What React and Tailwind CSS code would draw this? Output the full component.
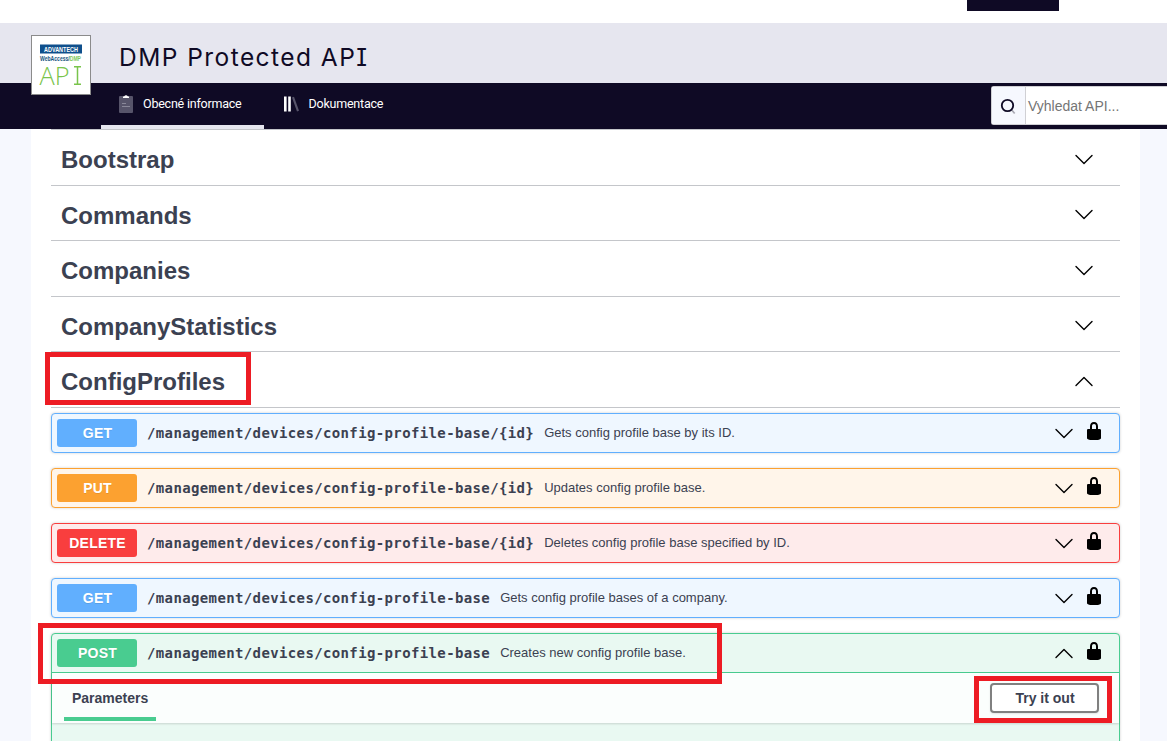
import React from "react";

const sections = ["Bootstrap", "Commands", "Companies", "CompanyStatistics"];

const tones = {
  GET: { box: "border-[#61affe] bg-[#eff7ff]", badge: "bg-[#61affe]" },
  PUT: { box: "border-[#fca130] bg-[#fff5ea]", badge: "bg-[#fca130]" },
  DELETE: { box: "border-[#f93e3e] bg-[#feebeb]", badge: "bg-[#f93e3e]" },
  POST: { box: "border-[#49cc90] bg-[#e9f9f2]", badge: "bg-[#49cc90]" },
};

const operations = [
  { method: "GET", path: "/management/devices/config-profile-base/{id}", text: "Gets config profile base by its ID." },
  { method: "PUT", path: "/management/devices/config-profile-base/{id}", text: "Updates config profile base." },
  { method: "DELETE", path: "/management/devices/config-profile-base/{id}", text: "Deletes config profile base specified by ID." },
  { method: "GET", path: "/management/devices/config-profile-base", text: "Gets config profile bases of a company." },
];

function Chevron({ up }) {
  return (
    <svg width="20" height="20" viewBox="0 0 20 20" fill="none" stroke="#000" strokeWidth="1.4" strokeLinecap="round" strokeLinejoin="round">
      <path d={up ? "M2 14.500 L10 6.500 L18 14.500" : "M2 6.500 L10 14.500 L18 6.500"} />
    </svg>
  );
}

function Lock() {
  return (
    <svg width="20" height="20" viewBox="0 0 20 20" fill="#000">
      <path d="M15.8 8H14V5.6C14 2.703 12.665 1 10 1 7.334 1 6 2.703 6 5.6V8H4c-.553 0-1 .646-1 1.199V17c0 .549.428 1.139.951 1.307l1.197.387C5.672 18.861 6.55 19 7.1 19h5.8c.549 0 1.428-.139 1.951-.307l1.196-.387c.524-.167.953-.757.953-1.306V9.199C17 8.646 16.352 8 15.8 8zM12 8H8V5.199C8 3.754 8.797 3 10 3c1.203 0 2 .754 2 2.199V8z" />
    </svg>
  );
}

function Section({ name, open }) {
  return (
    <div className="flex h-[55.5px] items-center border-b border-[#c4c6ca] pt-[5.5px] pr-[26px] pl-2.5">
      <h3 className="flex-1 text-[24px] leading-8 font-bold text-[#3b4151]">{name}</h3>
      <div className="pb-[3px]"><Chevron up={open} /></div>
    </div>
  );
}

function Summary({ op, open }) {
  return (
    <div className="flex h-[38px] items-center pr-[15px] pl-[5px]">
      <span className={"flex h-7 w-20 items-center justify-center rounded-[3px] pl-px text-sm font-bold tracking-[0.2px] text-white [text-shadow:0_1px_0_rgba(0,0,0,0.1)] " + tones[op.method].badge}>
        {op.method}
      </span>
      <span className="pl-2.5 font-['DejaVu_Sans_Mono',monospace] text-[14px] tracking-[0.37px] font-bold text-[#3b4151]">{op.path}</span>
      <span className="flex-1 pl-2.5 text-[13px] text-[#3b4151]">{op.text}</span>
      <Chevron up={open} />
      <span className="pb-[5px] pl-2.5"><Lock /></span>
    </div>
  );
}

function Operation({ op, open, children }) {
  return (
    <div className={"rounded border shadow-[0_0_3px_rgba(0,0,0,0.19)] " + tones[op.method].box}>
      <Summary op={op} open={open} />
      {children}
    </div>
  );
}

function Logo() {
  return (
    <svg width="60" height="60" viewBox="0 0 60 60" fontFamily="Liberation Sans, sans-serif">
      <rect x="0.5" y="0.5" width="59" height="59" fill="#fff" stroke="#8b8b8b" />
      <rect x="9" y="9.500" width="42" height="9" fill="#0f4f8c" />
      <text x="13" y="16.8" fontSize="7.5" fontWeight="700" fill="#fff" textLength="34" lengthAdjust="spacingAndGlyphs">ADVANTECH</text>
      <text x="9" y="26" fontSize="6.8" fontWeight="700" fill="#175480" textLength="41" lengthAdjust="spacingAndGlyphs">WebAccess/<tspan fill="#83c95c">DMP</tspan></text>
      <text x="8.5" y="50" fontSize="26" fontFamily="Open Sans, Noto Sans, sans-serif" fontWeight="300" fill="#79c44b" textLength="30" lengthAdjust="spacingAndGlyphs">AP</text>
      <path d="M43 31.700h7M46.500 31.700V49.300M43 49.300h7" stroke="#79c44b" strokeWidth="1.5" />
    </svg>
  );
}

export default function App() {
  return (
    <div className="relative flex h-[741px] w-[1167px] flex-col overflow-hidden bg-white font-['Liberation_Sans',Arial,sans-serif]">
      <div className="h-[23px] shrink-0 pl-[967px]">
        <div className="h-[11px] w-[92px] bg-[#0f0a25]" />
      </div>
      <header className="relative shrink-0">
        <div className="flex h-[60px] items-center bg-[#e6e6ef] pl-[119px]">
          <h1 className="pt-[9px] font-[Inter,sans-serif] text-[24.5px] tracking-[1.45px] whitespace-nowrap text-[#0f0a25]">
            DMP Protected AP<span className="[font-feature-settings:'cv08']">I</span>
          </h1>
        </div>
        <nav className="flex h-[46px] bg-[#0f0a25] pl-[101px] font-[Roboto,sans-serif] text-[12.5px] tracking-[-0.22px] text-white">
          <div className="flex w-[163px] items-center border-b-4 border-[#e6e6ef] pl-[18px]">
            <svg width="14" height="18" viewBox="0 0 14 18">
              <rect y="1" width="14" height="17" rx="1" fill="#57546a" />
              <path d="M4 3V1.500H5Q7-.8 9 1.500H10V3Z" fill="#fff" />
              <path d="M3 8.500h4M3 11.500h8" stroke="#8a8899" />
            </svg>
            <span className="pl-2.5">Obecné informace</span>
          </div>
          <div className="flex flex-1 items-center pb-1 pl-5">
            <svg width="16" height="16" viewBox="0 0 16 16">
              <path d="M0 .5h2.600v15H0zM4.200 .5h2.600v15H4.200z" fill="#fff" />
              <path d="M8 1.500l2-.7 5 13.900-2 .7z" fill="#57546a" />
            </svg>
            <span className="pl-[8.5px]">Dokumentace</span>
          </div>
          <div className="mt-[3px] flex h-[39px] w-44 rounded-l-[3px] border border-r-0 border-[#d0d0d4] bg-white font-['Liberation_Sans',sans-serif]">
            <div className="flex w-[34px] items-center justify-center border-r border-[#d0d0d4] bg-[#f6f8fe]">
              <svg width="18" height="18" viewBox="0 0 18 18" fill="none">
                <path d="M11.300 12.500l3.400 4" stroke="#a9a9b3" strokeWidth="1.800" />
                <circle cx="7.500" cy="8.500" r="5.700" stroke="#0f0a25" strokeWidth="1.800" />
              </svg>
            </div>
            <span className="self-center pt-0.5 pl-0.5 text-[14px] tracking-normal text-[#757575]">Vyhledat API...</span>
          </div>
        </nav>
        <div className="absolute top-3 left-[31px]"><Logo /></div>
      </header>
      <main className="min-h-0 flex-1 bg-[#f6f8fe] pr-[27px] pl-[31px]">
        <div className="h-[612px] overflow-hidden bg-white px-5">
          <div className="h-px bg-[#c4c6ca]" />
          {sections.map((name) => <Section key={name} name={name} />)}
          <Section name="ConfigProfiles" open />
          <div className="flex flex-col gap-[15px] pt-[5.5px]">
            {operations.map((op, i) => <Operation key={i} op={op} />)}
            <Operation open op={{ method: "POST", path: "/management/devices/config-profile-base", text: "Creates new config profile base." }}>
              <div className="h-[120px] border-t border-[#49cc90]">
                <div className="flex h-[50px] items-start justify-between bg-[#fbfefd] pr-5 pl-3 shadow-[0_1px_2px_rgba(0,0,0,0.15)]">
                  <div className="h-12 border-b-4 border-[#49cc90] px-2 pt-[15px] text-sm font-bold text-[#3b4151]">Parameters</div>
                  <button className="mt-2.5 flex h-[30px] w-[109px] items-center justify-center rounded border-2 border-[#808080] bg-white pl-px text-sm font-bold text-[#3b4151] shadow-[0_1px_2px_rgba(0,0,0,0.1)]">
                    Try it out
                  </button>
                </div>
              </div>
            </Operation>
          </div>
        </div>
      </main>
      <div className="absolute top-[352px] left-[45px] h-[53px] w-[206px] border-5 border-[#ed1c24]" />
      <div className="absolute top-[623px] left-[38px] h-[61px] w-[684px] border-5 border-[#ed1c24]" />
      <div className="absolute top-[676px] left-[974px] h-[47px] w-[138px] border-5 border-[#ed1c24]" />
    </div>
  );
}
